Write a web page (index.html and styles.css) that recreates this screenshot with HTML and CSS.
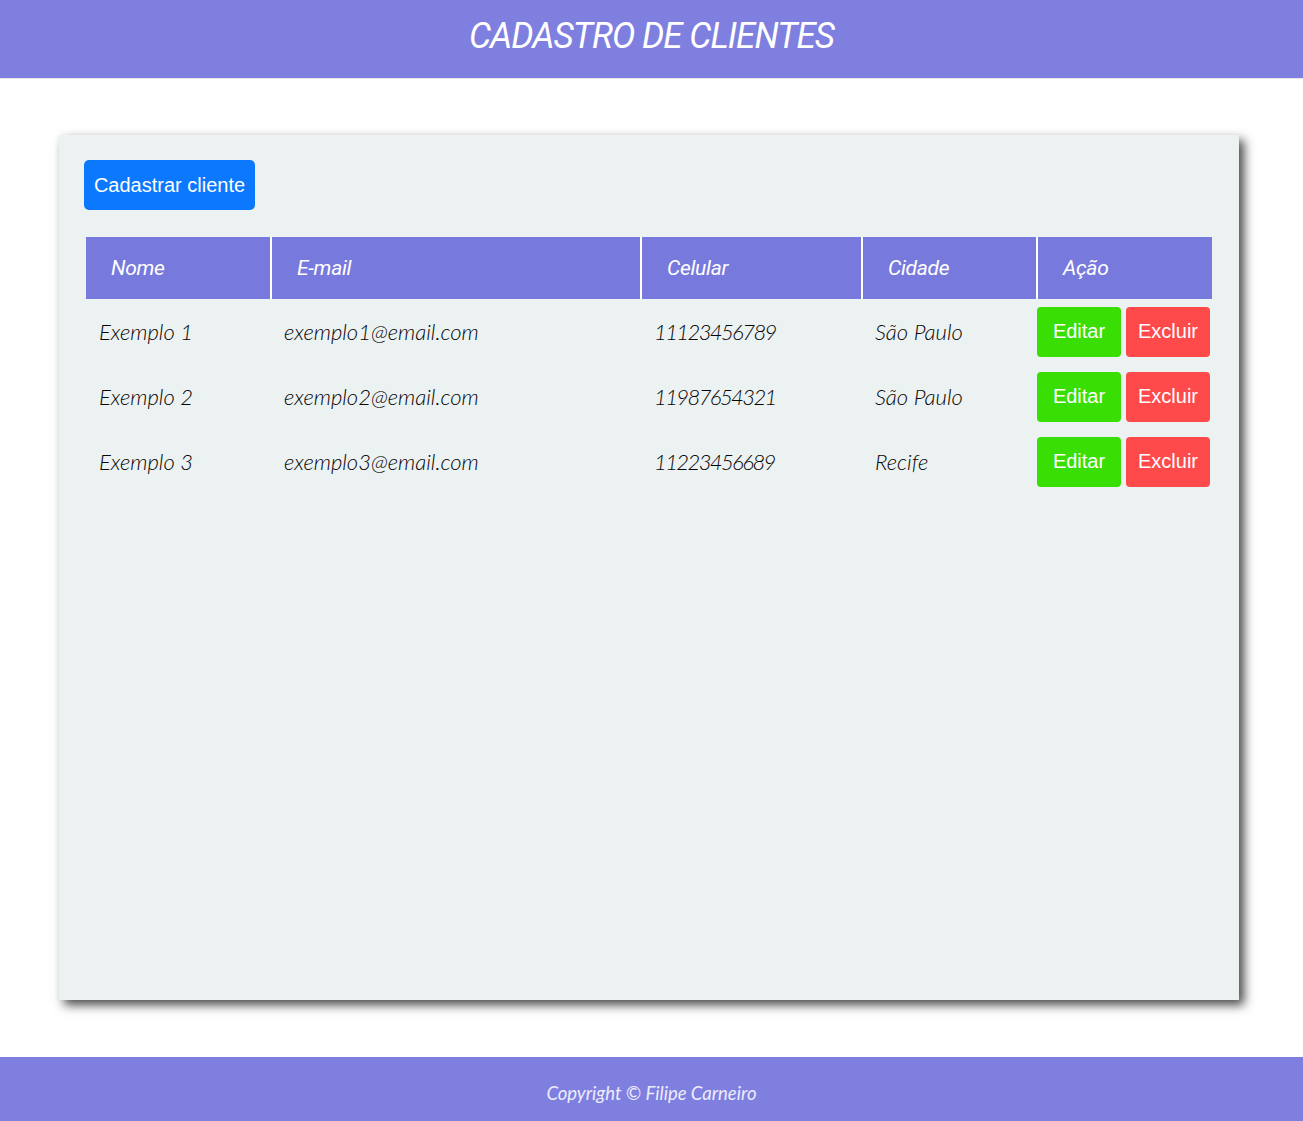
FILE: index.html
```html
<!DOCTYPE html>
<html lang="pt-BR">
<head>
<meta charset="utf-8">
<title>Cadastro de Clientes</title>
<link rel="stylesheet" href="styles.css">
</head>
<body>
<header class="topbar">
  <h1 class="title">CADASTRO DE CLIENTES</h1>
</header>
<main class="main">
  <section class="card">
    <button class="btn btn-primary" type="button">Cadastrar cliente</button>
    <table class="table">
      <colgroup>
        <col class="c-nome"><col class="c-email"><col class="c-cel"><col class="c-cidade"><col class="c-acao">
      </colgroup>
      <thead>
        <tr><th>Nome</th><th>E-mail</th><th>Celular</th><th>Cidade</th><th>Ação</th></tr>
      </thead>
      <tbody>
        <tr><td>Exemplo 1</td><td>exemplo1@email.com</td><td class="num">11123456789</td><td>São Paulo</td>
          <td class="actions"><button class="btn btn-edit" type="button">Editar</button><button class="btn btn-del" type="button">Excluir</button></td></tr>
        <tr><td>Exemplo 2</td><td>exemplo2@email.com</td><td class="num">11987654321</td><td>São Paulo</td>
          <td class="actions"><button class="btn btn-edit" type="button">Editar</button><button class="btn btn-del" type="button">Excluir</button></td></tr>
        <tr><td>Exemplo 3</td><td>exemplo3@email.com</td><td class="num">11223456689</td><td>Recife</td>
          <td class="actions"><button class="btn btn-edit" type="button">Editar</button><button class="btn btn-del" type="button">Excluir</button></td></tr>
      </tbody>
    </table>
  </section>
</main>
<footer class="footer">
  <p class="copy">Copyright © Filipe Carneiro</p>
</footer>
</body>
</html>
```

FILE: styles.css
```css
* { box-sizing: border-box; }
html, body { margin: 0; padding: 0; }
body {
  background: #ffffff;
  font-family: "Lato", "Liberation Sans", sans-serif;
  min-height: 1121px;
  display: flex;
  flex-direction: column;
}
.topbar {
  height: 78px;
  background: #7f7fe0;
  display: flex;
  align-items: center;
  justify-content: center;
  box-shadow: 0 1px 0 #e6e6e6;
  padding-bottom: 6px;
}
.title {
  margin: 0;
  color: #ffffff;
  font-family: "Roboto", sans-serif;
  font-style: italic;
  font-weight: 400;
  font-size: 35px;
  letter-spacing: -0.95px;
  transform: scaleY(1.04);
}
.main {
  flex: 1;
  padding: 57px 64px 57px 59px;
}
.card {
  width: 1180px;
  height: 865px;
  background: #ecf1f1;
  box-shadow: 5px 5px 10px rgba(0,0,0,0.72);
  padding: 25px 27px 25px 25px;
}
.btn {
  border: 0;
  border-radius: 4px;
  color: #fff;
  font-family: "Liberation Sans", Arial, sans-serif;
  font-size: 20px;
  height: 50px;
  cursor: pointer;
  white-space: nowrap;
}
.btn-primary {
  background: #0b78fe;
  padding: 0;
  width: 171px;
  display: block;
  border-radius: 5px;
}
.table {
  margin-top: 27px;
  margin-left: 2px;
  width: 1126px;
  border-collapse: collapse;
  table-layout: fixed;
}
.c-nome { width: 185px; }
.c-email { width: 370px; }
.c-cel { width: 221px; }
.c-cidade { width: 175px; }
.c-acao { width: 175px; }
.table th {
  background: #7879dc;
  color: #fff;
  font-family: "Roboto", sans-serif;
  font-style: italic;
  font-weight: 400;
  font-size: 21px;
  letter-spacing: -0.3px;
  text-align: left;
  height: 62px;
  padding: 0 0 0 25px;
  border-right: 2px solid #fff;
}
.table th:last-child { border-right: 0; }
.table td {
  font-style: italic;
  font-weight: 300;
  font-size: 22px;
  color: #050505;
  height: 65px;
  padding: 0 0 0 13px;
  vertical-align: middle;
}
.table td.num {
  letter-spacing: -1.6px;
}
.table td.actions {
  padding: 0;
}
.btn-edit {
  background: #39df04;
  width: 84px;
  margin-right: 5px;
}
.btn-del {
  background: #fe4a4a;
  width: 84px;
}
.footer {
  height: 64px;
  background: #7f7fe0;
  display: flex;
  align-items: center;
  justify-content: center;
}
.copy {
  margin: 0;
  color: #ececfb;
  font-style: italic;
  font-weight: 400;
  font-size: 18.5px;
  padding-top: 8px;
}
```
